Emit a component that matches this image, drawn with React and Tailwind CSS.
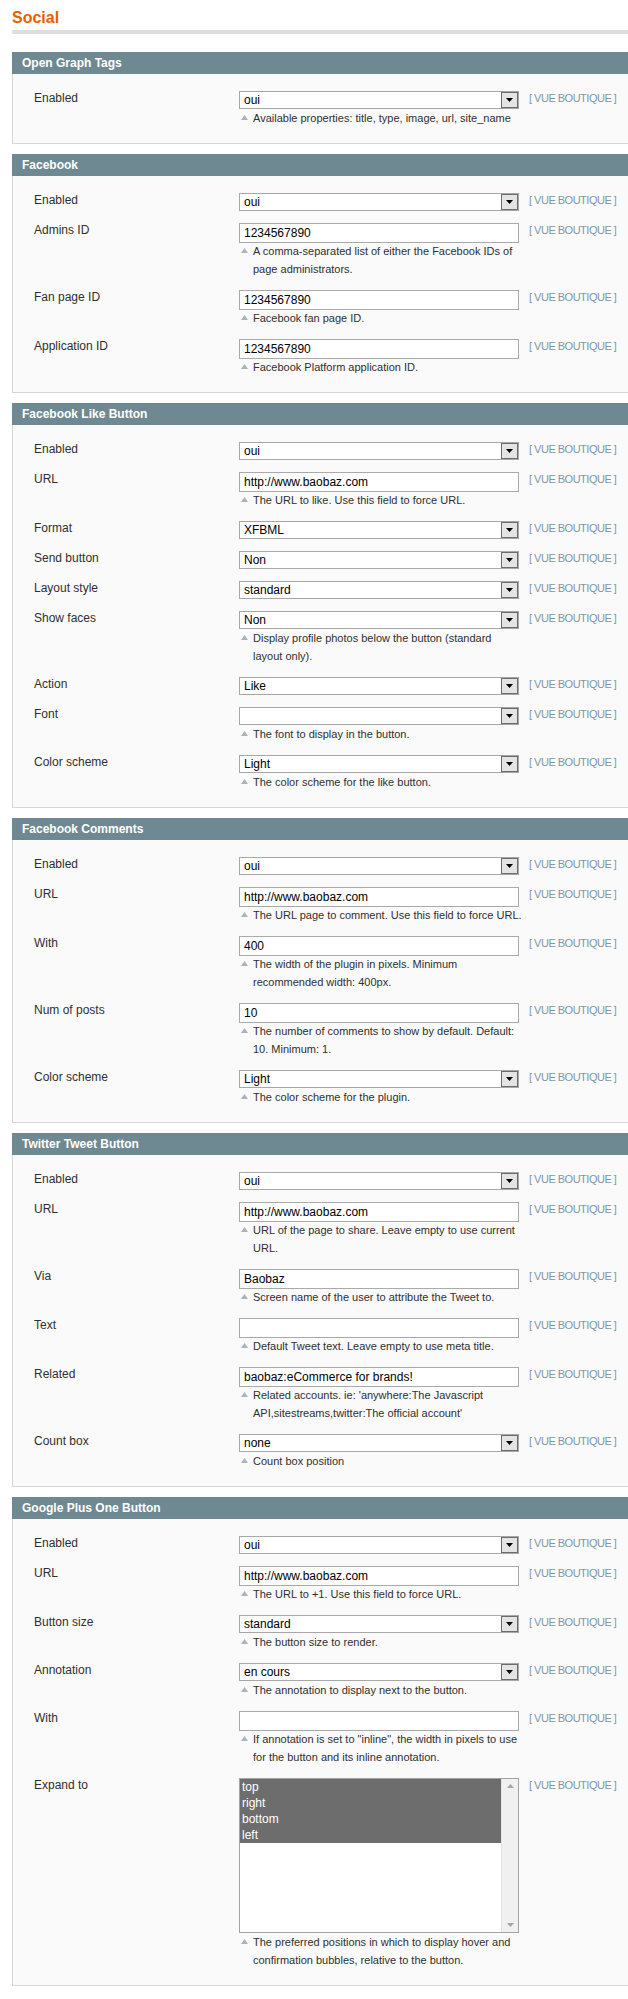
import React from "react";

const FONT = "font-['Liberation_Sans',Arial,Helvetica,sans-serif]";

function Arrow() {
  return (
    <svg width="7" height="4" viewBox="0 0 7 4" className="block">
      <polygon points="0,0 7,0 3.5,4" fill="#000" />
    </svg>
  );
}

function Select({ value }) {
  return (
    <div className="relative h-[18px] w-[280px] border border-[#a7a7a7] bg-white pl-[4px] text-[12px] leading-[16px] text-black">
      {value}
      <div className="absolute top-0 right-0 bottom-0 flex w-[17px] items-center justify-center border border-[#6c6c6c] bg-[#e4e4e4]">
        <Arrow />
      </div>
    </div>
  );
}

function Input({ value }) {
  return (
    <div className="h-[20px] w-[280px] border border-[#aaaaaa] bg-white pl-[4px] text-[12px] leading-[18px] text-black whitespace-nowrap">
      {value}
    </div>
  );
}

function ListBox({ items }) {
  return (
    <div className="relative h-[155px] w-[280px] border border-[#a3a3a3] bg-white text-[12px] leading-[16px]">
      <div className="mr-[17px]">
        {items.map((it) => (
          <div key={it} className="bg-[#6d6d6d] pl-[2px] text-white">
            {it}
          </div>
        ))}
      </div>
      <div className="absolute top-0 right-0 bottom-0 flex w-[17px] flex-col items-center justify-between border-l border-[#e3e3e3] bg-[#f0f0f0] py-[5px]">
        <svg width="7" height="4" viewBox="0 0 7 4">
          <polygon points="0,4 7,4 3.5,0" fill="#a4a4a4" />
        </svg>
        <svg width="7" height="4" viewBox="0 0 7 4">
          <polygon points="0,0 7,0 3.5,4" fill="#a4a4a4" />
        </svg>
      </div>
    </div>
  );
}

function Note({ lines }) {
  return (
    <div className="relative pl-[14px] text-[11px] leading-[18px] text-[#2f2f2f]">
      <svg width="7" height="5" viewBox="0 0 7 5" className="absolute left-[2px] top-[6px]">
        <polygon points="0,5 7,5 3.5,0" fill="#a9b4ba" />
      </svg>
      {lines.map((l, i) => (
        <div key={i} className="whitespace-nowrap">
          {l}
        </div>
      ))}
    </div>
  );
}

function Scope() {
  return (
    <div className="ml-[10px] whitespace-nowrap text-[11px] leading-[14px] tracking-[-0.5px] text-[#7d97a6]">
      [ VUE BOUTIQUE ]
    </div>
  );
}

function Row({ label, field, note, input }) {
  return (
    <div className="flex pb-[12px]">
      <div className="w-[205px] shrink-0 text-[12px] leading-[14px] text-[#2f2f2f]">{label}</div>
      <div className="w-[280px] shrink-0">
        <div className={input && note ? "h-[19px]" : "h-[18px]"}>{field}</div>
        {note && <Note lines={note} />}
      </div>
      <Scope />
    </div>
  );
}

function Panel({ title, children }) {
  return (
    <div className="mb-[10px] ml-[12px]">
      <div className="h-[22px] bg-[#6f8992] pl-[10px] text-[12px] font-bold leading-[22px] text-white">{title}</div>
      <div className="border-b border-l border-[#d6d6d6] bg-[#fafafa] pt-[17px] pb-[4px] pl-[21px]">{children}</div>
    </div>
  );
}

const URL = "http://www.baobaz.com";

export default function App() {
  return (
    <div className={`${FONT} min-h-[1999px] w-[628px] overflow-hidden bg-white`}>
      <div className="pl-[12px] pt-[9px]">
        <div className="text-[16px] font-bold leading-[18px] text-[#eb5e00]">Social</div>
        <div className="mt-[3px] h-[4px] bg-[#dfdfdf]" />
      </div>
      <div className="h-[18px]" />

      <Panel title="Open Graph Tags">
        <Row label="Enabled" field={<Select value="oui" />} note={["Available properties: title, type, image, url, site_name"]} />
      </Panel>

      <Panel title="Facebook">
        <Row label="Enabled" field={<Select value="oui" />} />
        <Row
          label="Admins ID"
          input
          field={<Input value="1234567890" />}
          note={["A comma-separated list of either the Facebook IDs of", "page administrators."]}
        />
        <Row label="Fan page ID" input field={<Input value="1234567890" />} note={["Facebook fan page ID."]} />
        <Row label="Application ID" input field={<Input value="1234567890" />} note={["Facebook Platform application ID."]} />
      </Panel>

      <Panel title="Facebook Like Button">
        <Row label="Enabled" field={<Select value="oui" />} />
        <Row label="URL" input field={<Input value={URL} />} note={["The URL to like. Use this field to force URL."]} />
        <Row label="Format" field={<Select value="XFBML" />} />
        <Row label="Send button" field={<Select value="Non" />} />
        <Row label="Layout style" field={<Select value="standard" />} />
        <Row
          label="Show faces"
          field={<Select value="Non" />}
          note={["Display profile photos below the button (standard", "layout only)."]}
        />
        <Row label="Action" field={<Select value="Like" />} />
        <Row label="Font" field={<Select value="" />} note={["The font to display in the button."]} />
        <Row label="Color scheme" field={<Select value="Light" />} note={["The color scheme for the like button."]} />
      </Panel>

      <Panel title="Facebook Comments">
        <Row label="Enabled" field={<Select value="oui" />} />
        <Row label="URL" input field={<Input value={URL} />} note={["The URL page to comment. Use this field to force URL."]} />
        <Row
          label="With"
          input
          field={<Input value="400" />}
          note={["The width of the plugin in pixels. Minimum", "recommended width: 400px."]}
        />
        <Row
          label="Num of posts"
          input
          field={<Input value="10" />}
          note={["The number of comments to show by default. Default:", "10. Minimum: 1."]}
        />
        <Row label="Color scheme" field={<Select value="Light" />} note={["The color scheme for the plugin."]} />
      </Panel>

      <Panel title="Twitter Tweet Button">
        <Row label="Enabled" field={<Select value="oui" />} />
        <Row
          label="URL"
          input
          field={<Input value={URL} />}
          note={["URL of the page to share. Leave empty to use current", "URL."]}
        />
        <Row label="Via" input field={<Input value="Baobaz" />} note={["Screen name of the user to attribute the Tweet to."]} />
        <Row label="Text" input field={<Input value="" />} note={["Default Tweet text. Leave empty to use meta title."]} />
        <Row
          label="Related"
          input
          field={<Input value="baobaz:eCommerce for brands!" />}
          note={["Related accounts. ie: 'anywhere:The Javascript", "API,sitestreams,twitter:The official account'"]}
        />
        <Row label="Count box" field={<Select value="none" />} note={["Count box position"]} />
      </Panel>

      <Panel title="Google Plus One Button">
        <Row label="Enabled" field={<Select value="oui" />} />
        <Row label="URL" input field={<Input value={URL} />} note={["The URL to +1. Use this field to force URL."]} />
        <Row label="Button size" field={<Select value="standard" />} note={["The button size to render."]} />
        <Row label="Annotation" field={<Select value="en cours" />} note={["The annotation to display next to the button."]} />
        <Row
          label="With"
          input
          field={<Input value="" />}
          note={['If annotation is set to "inline", the width in pixels to use', "for the button and its inline annotation."]}
        />
        <div className="flex pb-[12px]">
          <div className="w-[205px] shrink-0 text-[12px] leading-[14px] text-[#2f2f2f]">Expand to</div>
          <div className="w-[280px] shrink-0">
            <ListBox items={["top", "right", "bottom", "left"]} />
            <Note
              lines={["The preferred positions in which to display hover and", "confirmation bubbles, relative to the button."]}
            />
          </div>
          <Scope />
        </div>
      </Panel>
    </div>
  );
}
